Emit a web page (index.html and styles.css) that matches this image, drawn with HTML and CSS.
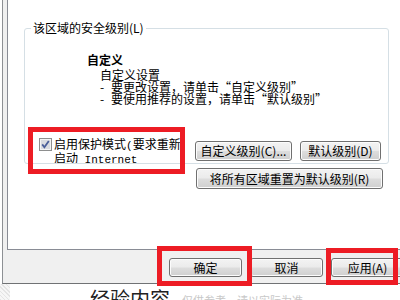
FILE: index.html
```html
<!DOCTYPE html>
<html lang="zh-CN">
<head>
<meta charset="utf-8">
<title>Internet 选项</title>
<link rel="stylesheet" href="styles.css">
</head>
<body>
<div class="dialog">
  <div class="panel">
    <fieldset class="zone">
      <legend class="zone-legend">该区域的安全级别(L)</legend>
      <div class="level">
        <div class="level-title">自定义</div>
        <div class="level-desc">
          <div class="desc-line">自定义设置</div>
          <div class="desc-line"><span class="dash">-</span>要更改设置，请单击“自定义级别”</div>
          <div class="desc-line"><span class="dash">-</span>要使用推荐的设置，请单击“默认级别”</div>
        </div>
      </div>
      <div class="zone-row">
        <label class="protect mark">
          <span class="check"><svg width="13" height="13" viewBox="0 0 13 13"><rect x="0.5" y="0.5" width="12" height="12" fill="#f4f4f4" stroke="#8e8f8f"/><rect x="2" y="2" width="9" height="9" fill="#d9dbe0"/><path d="M3.2 6.4 L5.4 9.2 L9.8 3" fill="none" stroke="#4a5e99" stroke-width="1.8"/></svg></span>
          <span class="protect-text">启用保护模式<span class="latin">(</span>要求重新启动<span class="latin"> Internet Explorer)</span></span>
        </label>
        <div class="zone-btns">
          <button class="btn btn-custom">自定义级别(C)...</button>
          <button class="btn btn-default">默认级别(D)</button>
        </div>
      </div>
    </fieldset>
    <div class="reset-row">
      <button class="btn btn-reset">将所有区域重置为默认级别(R)</button>
    </div>
  </div>
  <div class="footer">
    <span class="mark mark-ok"><button class="btn btn-foot">确定</button></span>
    <button class="btn btn-foot">取消</button>
    <span class="mark mark-apply"><button class="btn btn-foot">应用(A)</button></span>
  </div>
</div>
<div class="page">
  <div class="hatch"></div>
  <div class="page-title">经验内容</div>
  <div class="page-note">仅供参考，请以实际为准</div>
</div>
</body>
</html>
```

FILE: styles.css
```css
html, body {
  margin: 0;
  padding: 0;
  width: 400px;
  height: 300px;
  overflow: hidden;
  background: #fff;
}

body {
  font-family: "Noto Sans CJK SC", "Liberation Sans", sans-serif;
  font-size: 12px;
  color: #000;
}

.dialog {
  width: 430px;
  height: 284px;
  box-sizing: border-box;
  margin-left: 2px;
  border-left: 1px solid #8d9094;
  border-bottom: 1px solid #707274;
  background: #f0f0f0;
  display: flex;
  flex-direction: column;
}

.panel {
  margin-left: 4px;
  height: 250px;
  box-sizing: border-box;
  border-left: 1px solid #898c95;
  border-bottom: 1px solid #898c95;
  background: #fff;
  display: flex;
  flex-direction: column;
  align-items: flex-start;
}

.zone {
  margin: 20px 0 0 16px;
  padding: 0;
  width: 365px;
  box-sizing: border-box;
  border: 1px solid #d5dfe5;
  border-radius: 3px;
}

.zone-legend {
  margin-left: 6px;
  padding: 0 2px;
  line-height: 16px;
  height: 16px;
}

.level {
  margin: 18px 0 0 62px;
}

.level-title {
  font-weight: bold;
  line-height: 12px;
}

.level-desc {
  margin: 3px 0 0 13px;
}

.desc-line {
  line-height: 12px;
  white-space: nowrap;
}

.dash {
  display: inline-block;
  width: 11px;
}

.zone-row {
  display: flex;
  align-items: flex-start;
  margin-top: 33px;
}

.protect {
  margin-left: 14px;
  width: 143px;
  height: 25px;
  display: flex;
  gap: 2px;
  align-items: flex-start;
}

.protect-text {
  width: 128px;
  line-height: 12px;
  height: 25px;
  overflow: hidden;
}

.latin {
  font-family: "Liberation Mono", "DejaVu Sans Mono", monospace;
  font-size: 11px;
}

.check {
  display: flex;
  width: 13px;
  height: 13px;
}

.zone-btns {
  margin: 3px 0 0 13px;
  display: flex;
  gap: 8px;
}

.btn {
  font-family: "Noto Sans CJK SC", "Liberation Sans", sans-serif;
  font-size: 12px;
  color: #000;
  padding: 0;
  margin: 0;
  box-sizing: border-box;
  border: 1px solid #707070;
  border-radius: 3px;
  background: linear-gradient(#f3f3f3 0%, #ebebeb 48%, #dddddd 52%, #cfcfcf 100%);
  box-shadow: inset 0 0 0 1px #fcfcfc;
  display: flex;
  align-items: center;
  justify-content: center;
  line-height: 12px;
  white-space: nowrap;
}

.btn-custom {
  width: 97px;
  height: 20px;
}

.btn-default {
  width: 81px;
  height: 20px;
}

.reset-row {
  margin-top: 4px;
  padding-left: 188px;
  display: flex;
}

.btn-reset {
  width: 187px;
  height: 21px;
}

.footer {
  display: flex;
  gap: 8px;
  padding: 8px 0 0 166px;
}

.btn-foot {
  width: 73px;
  height: 19px;
}

.mark {
  position: relative;
  display: flex;
}

.mark::after {
  content: "";
  position: absolute;
  border: 5px solid #ed1c24;
  pointer-events: none;
}

.protect.mark::after {
  top: -11px;
  left: -11px;
  right: -3px;
  bottom: -11px;
}

.mark-ok::after {
  top: -12px;
  left: -12px;
  right: -10px;
  bottom: -9px;
}

.mark-apply::after {
  top: -10px;
  left: -5px;
  right: 6px;
  bottom: -8px;
}

.page {
  display: flex;
  align-items: flex-start;
  height: 16px;
  overflow: hidden;
}

.hatch {
  width: 10px;
  height: 16px;
  background: repeating-linear-gradient(45deg, #e4e4e4 0 1px, #f6f6f6 1px 3px);
}

.page-title {
  margin: 4px 0 0 80px;
  font-size: 20px;
  line-height: 22px;
  color: #222;
}

.page-note {
  margin: 10px 0 0 12px;
  font-size: 11px;
  line-height: 12px;
  color: #c8c8c8;
}
```
